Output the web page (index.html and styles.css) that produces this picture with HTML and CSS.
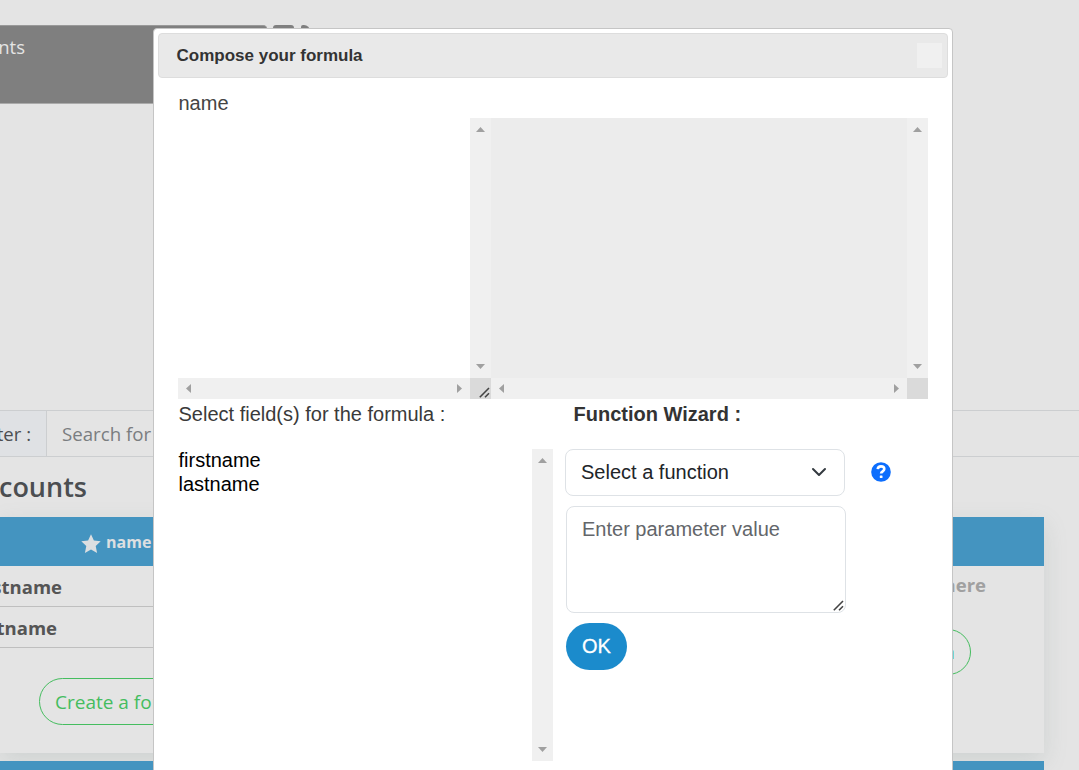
FILE: index.html
```html
<!DOCTYPE html>
<html lang="en">
<head>
<meta charset="utf-8">
<title>Compose your formula</title>
<link rel="stylesheet" href="styles.css">
</head>
<body>
<div class="page">
  <header class="top">
    <nav class="nav"><span class="clip nav-text">Accounts</span></nav>
    <i class="tab tab-a"></i><i class="tab tab-b"></i>
  </header>
  <div class="filter">
    <div class="filter-label"><span class="clip">Filter :</span></div>
    <div class="filter-input">Search for</div>
  </div>
  <h2 class="heading"><span class="clip">Accounts</span></h2>
  <main class="cards">
    <section class="card card-left">
      <div class="card-head">
        <svg class="star" viewBox="0 0 20 20"><path d="M10 .3l2.9 6.2 6.8.8-5 4.7 1.4 7-6.1-3.5L3.9 19l1.4-7-5-4.7 6.8-.8z"/></svg>
        <span class="star-name">name</span>
      </div>
      <div class="row"><span class="clip row-a">firstname</span></div>
      <div class="row"><span class="clip row-b">lastname</span></div>
      <button class="create">Create a formula</button>
    </section>
    <section class="card card-right">
      <div class="card-head"></div>
      <div class="drop">Drop here</div>
      <button class="create create-right">join</button>
    </section>
  </main>
  <div class="next"></div>
</div>

<div class="dialog">
  <div class="titlebar"><span class="title">Compose your formula</span><span class="close"></span></div>
  <div class="content">
    <div class="name">name</div>
    <div class="editors">
      <div class="editor editor-a">
        <div class="pane"></div>
        <div class="vbar"><i class="up"></i><i class="down"></i></div>
        <div class="hbar"><i class="left"></i><i class="right"></i></div>
        <div class="corner"><svg class="grip" viewBox="0 0 11 11"><path d="M.8 10.2L10 1M6 10.2L10 6.2"/></svg></div>
      </div>
      <div class="editor editor-b">
        <div class="pane grey"></div>
        <div class="vbar"><i class="up"></i><i class="down"></i></div>
        <div class="hbar"><i class="left"></i><i class="right"></i></div>
        <div class="corner"></div>
      </div>
    </div>
    <div class="lower">
      <div class="fields">
        <div class="label fields-label">Select field(s) for the formula :</div>
        <div class="list">
          <div class="options"><div>firstname</div><div>lastname</div></div>
          <div class="vbar"><i class="up"></i><i class="down"></i></div>
        </div>
      </div>
      <div class="wizard">
        <div class="label wizard-label">Function Wizard :</div>
        <div class="select-line">
          <div class="select"><span>Select a function</span>
            <svg class="chevron" viewBox="0 0 16 16"><path d="M2 5l6 6 6-6"/></svg>
          </div>
          <svg class="help" viewBox="0 0 20 20"><circle cx="10" cy="10" r="9.8"/><path d="M6.7 7.2c.2-1.9 1.5-2.8 3.3-2.8 1.9 0 3.3 1 3.3 2.6 0 2.4-3.2 2.3-3.2 4.6"/><rect x="8.8" y="13.4" width="2.7" height="2.5" rx=".5"/></svg>
        </div>
        <div class="param">Enter parameter value<svg class="grip" viewBox="0 0 11 11"><path d="M.8 10.2L10 1M6 10.2L10 6.2"/></svg></div>
        <button class="ok">OK</button>
      </div>
    </div>
  </div>
</div>
</body>
</html>
```
FILE: styles.css
```css
* { box-sizing: border-box; }
body { margin: 0; width: 1079px; height: 770px; overflow: hidden; position: relative; background: #e4e4e4; font-family: "Open Sans", "Noto Sans", sans-serif; font-size: 18.5px; color: #4b4e51; }
button { font-family: inherit; margin: 0; }
.page { height: 770px; overflow: hidden; display: flex; flex-direction: column; }
.clip { display: flex; justify-content: flex-end; white-space: nowrap; }

.top { height: 410px; padding-top: 25px; display: flex; flex: none; align-items: flex-start; }
.nav { width: 267px; height: 79px; background: #7f7f7f; border-top: 1px solid #999; border-bottom: 1px solid #aaa; border-top-right-radius: 4px; color: #e4e4e4; }
.nav-text { width: 25px; line-height: 41px; }
.tab { height: 6px; background: #7f7f7f; border-radius: 3px 3px 0 0; }
.tab-a { width: 21px; margin-left: 6px; }
.tab-b { width: 9px; margin-left: 7px; border-top-right-radius: 9px; }

.filter { height: 47px; flex: none; display: flex; border-top: 1px solid #ccced0; border-bottom: 1px solid #ccced0; line-height: 46px; }
.filter-label { width: 47px; background: #dfe1e4; border-right: 1px solid #ccced0; padding-right: 15px; display: flex; justify-content: flex-end; overflow: hidden; }
.filter-input { padding-left: 15px; font-size: 18.7px; color: #7a7d80; }
.heading { margin: 0; height: 60px; flex: none; font-size: 27px; font-weight: 600; line-height: 60px; }
.heading .clip { width: 87px; }

.cards { display: flex; justify-content: space-between; flex: none; height: 236px; width: 1044px; }
.card { background: #e4e4e4; box-shadow: 0 8px 22px rgba(120,140,135,.2); }
.card-left { width: 500px; }
.card-right { width: 500px; display: flex; flex-direction: column; align-items: flex-end; }
.card-head { width: 100%; height: 49px; background: #4494c0; display: flex; align-items: center; padding: 0 0 0 81px; font-weight: 700; font-size: 16px; color: #dcdfe1; }
.card-right .card-head { padding: 0; }
.star { width: 20px; height: 20px; margin: 5px 5px 0 0; fill: #dcdfe1; }
.row { height: 41px; border-bottom: 1px solid #bfbfbf; font-weight: 700; font-size: 18.5px; line-height: 42px; color: #555; }
.row-a { width: 62px; }
.row-b { width: 57px; }
.create { display: block; height: 47px; margin: 30px 0 0 39px; width: 190px; padding: 0 15px; border: 1px solid #45bd5f; border-radius: 24px; background: none; color: #45bd5f; font-size: 19px; text-align: left; white-space: nowrap; }
.drop { height: 40px; line-height: 38px; padding-right: 58px; font-weight: 700; color: #a0a0a0; }
.create-right { height: 46px; margin: 23px 73px 0 0; width: 150px; text-align: right; }
.next { height: 20px; margin-top: 8px; width: 1044px; flex: none; background: #4494c0; }

.dialog { position: absolute; left: 153px; top: 28px; width: 800px; height: 760px; background: #fff; border: 1px solid #c5c5c5; border-radius: 4px; padding: 4px; font-family: "Liberation Sans", Arial, sans-serif; font-size: 20px; color: #333; }
.titlebar { height: 45px; background: #e9e9e9; border: 1px solid #ddd; border-radius: 4px; display: flex; align-items: center; justify-content: space-between; padding: 0 5px 0 17.5px; font-size: 17px; font-weight: 700; }
.close { width: 25px; height: 25px; background: #f0f0f0; }
.content { padding: 10px 20px 0; }
.name { height: 30px; line-height: 30px; padding-left: .5px; color: #444; }
.editors { display: flex; height: 281px; }
.editor { display: grid; grid-template: 260px 21px / 1fr 21px; }
.editor-a { width: 313px; }
.editor-b { width: 437px; }
.pane { background: #fff; }
.pane.grey { background: #ececec; }
.vbar, .hbar { background: #f0f0f0; display: flex; align-items: center; justify-content: space-between; }
.vbar { flex-direction: column; padding: 9px 0; width: 21px; }
.hbar { padding: 0 8px; }
.corner { background: #dadada; display: flex; align-items: flex-end; justify-content: flex-end; padding: 0 1px 1px 0; }
.up, .down, .left, .right { background: #a0a0a0; }
.up, .down { width: 9px; height: 5px; }
.left, .right { width: 5px; height: 9px; }
.up { clip-path: polygon(50% 0, 100% 100%, 0 100%); }
.down { clip-path: polygon(0 0, 100% 0, 50% 100%); }
.left { clip-path: polygon(100% 0, 100% 100%, 0 50%); }
.right { clip-path: polygon(0 0, 100% 50%, 0 100%); }
.grip { width: 11px; height: 11px; fill: none; stroke: #444; stroke-width: 1.6; }

.lower { display: flex; }
.fields { width: 375px; margin-right: 12px; }
.label { height: 50px; line-height: 30px; white-space: nowrap; color: #3a3a3a; }
.fields-label { padding-left: .5px; }
.list { display: flex; justify-content: space-between; height: 312px; color: #000; line-height: 24px; }
.options { padding-left: .5px; margin-top: -1px; }
.wizard-label { font-weight: 700; padding-left: 8.5px; color: #333; }
.select-line { display: flex; align-items: center; }
.select { width: 280px; height: 47px; border: 1px solid #dee2e6; border-radius: 8px; display: flex; align-items: center; justify-content: space-between; padding: 0 17px 0 15px; color: #212529; }
.chevron { width: 16px; height: 16px; margin-bottom: 1px; fill: none; stroke: #343a40; stroke-width: 2; stroke-linecap: round; stroke-linejoin: round; }
.help { width: 20px; height: 20px; margin: 0 0 2px 26px; fill: #0d6efd; }
.help path { fill: none; stroke: #fff; stroke-width: 2.6; }
.help rect { fill: #fff; }
.param { width: 280px; height: 107px; margin: 10px 0 10px 1px; border: 1px solid #dee2e6; border-radius: 8px; padding: 7px 1px 1px 15px; line-height: 30px; color: #63666a; display: flex; justify-content: space-between; white-space: nowrap; }
.param .grip { align-self: flex-end; flex: none; }
.ok { width: 61px; height: 47px; margin-left: 1px; border: 0; border-radius: 24px; background: #1b8bcc; color: #fff; font-size: 20px; padding: 0; -webkit-text-stroke: .3px #fff; }
```
